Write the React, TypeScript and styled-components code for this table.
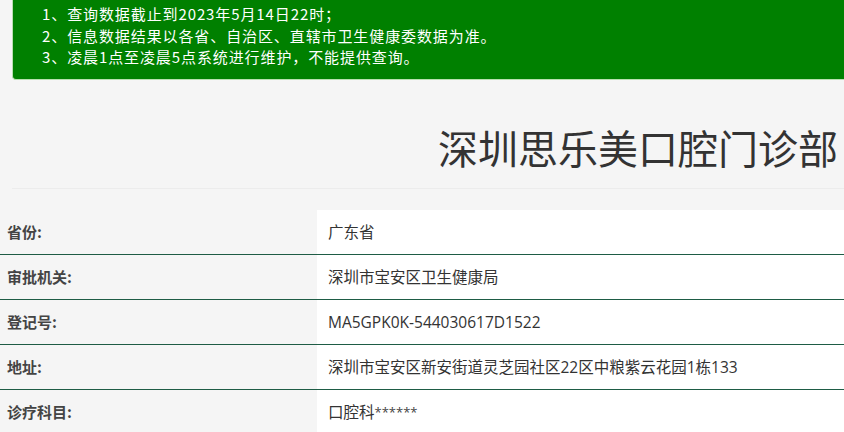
import React from "react";
import styled, { createGlobalStyle } from "styled-components";

const Global = createGlobalStyle`
  html, body { margin: 0; padding: 0; background: #f5f5f5; }
  body { font-family: "Noto Sans CJK SC", "Noto Sans", sans-serif; color: #333; }
`;

const Page = styled.div`
  width: 844px;
  overflow: hidden;
`;

const Notice = styled.div`
  margin-left: 12px;
  background: #008000;
  border: 1px solid #b9e0b0;
  border-top: none;
  border-right: none;
  border-radius: 0 0 0 4px;
  padding: 3px 0 11px 29px;
  color: #fff;
  font-size: 15px;
  letter-spacing: 0.9px;
  line-height: 21.5px;
`;

const NoticeLine = styled.div`
  white-space: nowrap;
`;

const Title = styled.h1`
  margin: 45px 0 0;
  padding-right: 6px;
  text-align: right;
  font-size: 40px;
  font-weight: 400;
  line-height: 44px;
  color: #333;
`;

const Rule = styled.hr`
  margin: 19px 0 21px 12px;
  border: none;
  border-top: 1px solid #ececec;
`;

const Table = styled.div`
  display: grid;
  grid-template-columns: 317px 1fr;
`;

const Label = styled.div<{ $last?: boolean }>`
  height: 44px;
  display: flex;
  align-items: center;
  padding-left: 7px;
  font-size: 15px;
  font-weight: 700;
  color: #444;
  border-bottom: ${(p) => (p.$last ? "none" : "1px solid #1e5c45")};
`;

const Value = styled.div<{ $last?: boolean }>`
  height: 44px;
  display: flex;
  align-items: center;
  padding-left: 11px;
  background: #fff;
  font-family: "Open Sans", "Noto Sans CJK SC", sans-serif;
  font-size: 15.5px;
  color: #333;
  white-space: nowrap;
  border-bottom: ${(p) => (p.$last ? "none" : "1px solid #1e5c45")};
`;

const Masked = styled.span`
  font-size: 13px;
  color: #444;
`;

const rows: [string, React.ReactNode][] = [
  ["省份:", "广东省"],
  ["审批机关:", "深圳市宝安区卫生健康局"],
  ["登记号:", "MA5GPK0K-544030617D1522"],
  ["地址:", "深圳市宝安区新安街道灵芝园社区22区中粮紫云花园1栋133"],
  [
    "诊疗科目:",
    <>
      口腔科<Masked>******</Masked>
    </>,
  ],
];

export default function App() {
  return (
    <Page>
      <Global />
      <Notice>
        <NoticeLine>1、查询数据截止到2023年5月14日22时；</NoticeLine>
        <NoticeLine>2、信息数据结果以各省、自治区、直辖市卫生健康委数据为准。</NoticeLine>
        <NoticeLine>3、凌晨1点至凌晨5点系统进行维护，不能提供查询。</NoticeLine>
      </Notice>
      <Title>深圳思乐美口腔门诊部</Title>
      <Rule />
      <Table>
        {rows.map(([k, v], i) => (
          <React.Fragment key={k}>
            <Label $last={i === rows.length - 1}>{k}</Label>
            <Value $last={i === rows.length - 1}>{v}</Value>
          </React.Fragment>
        ))}
      </Table>
    </Page>
  );
}
